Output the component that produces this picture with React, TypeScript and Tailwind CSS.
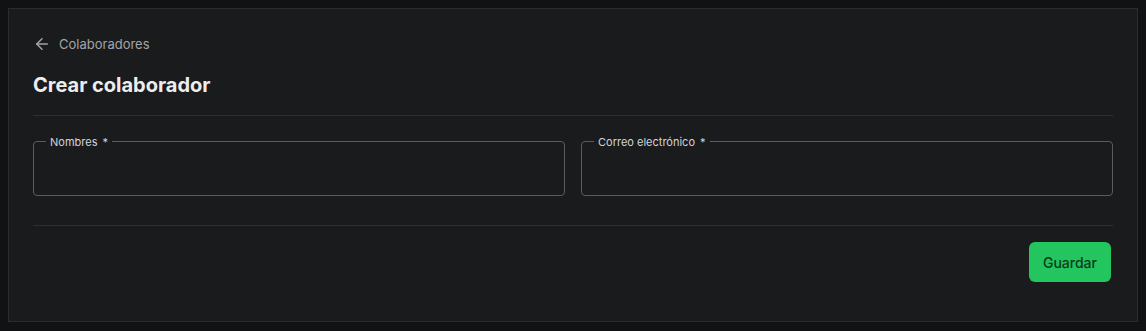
import React from "react";

function Field({ label }: { label: string }) {
  return (
    <div className="relative h-[55px] flex-1 rounded-[4px] border border-[#5a5b5e]">
      <span className="absolute -top-[8px] left-[12px] bg-[#1a1b1d] px-1 text-[11px] leading-[16px] text-[#d4d4d6]">
        {label}
        <span className="ml-[5px]">*</span>
      </span>
    </div>
  );
}

export default function App() {
  return (
    <div
      className="min-h-[331px] w-full bg-[#111214] p-2"
      style={{ fontFamily: "Inter, 'Noto Sans', sans-serif" }}
    >
      <div className="h-[314px] border border-[#2b2c2f] bg-[#1a1b1d] px-6 pb-6 pt-[25px]">
        <div className="flex items-center gap-2 text-[13px] leading-5 text-[#a3a4a8]">
          <svg width="18" height="18" viewBox="0 0 24 24" fill="none" stroke="currentColor" strokeWidth="2" strokeLinecap="round" strokeLinejoin="round">
            <path d="m12 19-7-7 7-7" />
            <path d="M19 12H5" />
          </svg>
          <span>Colaboradores</span>
        </div>
        <h1 className="mt-[17px] text-[20px] font-bold leading-7 text-[#ededee]">
          Crear colaborador
        </h1>
        <div className="mt-4 h-px bg-[#2e2f32]" />
        <div className="mt-[25px] flex gap-4">
          <Field label="Nombres" />
          <Field label="Correo electrónico" />
        </div>
        <div className="mt-[29px] h-px bg-[#2e2f32]" />
        <div className="mt-4 flex justify-end pr-[2px]">
          <button className="h-10 rounded-md bg-[#22c55e] px-[14px] text-[14px] font-medium text-[#0b3a1c]">
            Guardar
          </button>
        </div>
      </div>
    </div>
  );
}
